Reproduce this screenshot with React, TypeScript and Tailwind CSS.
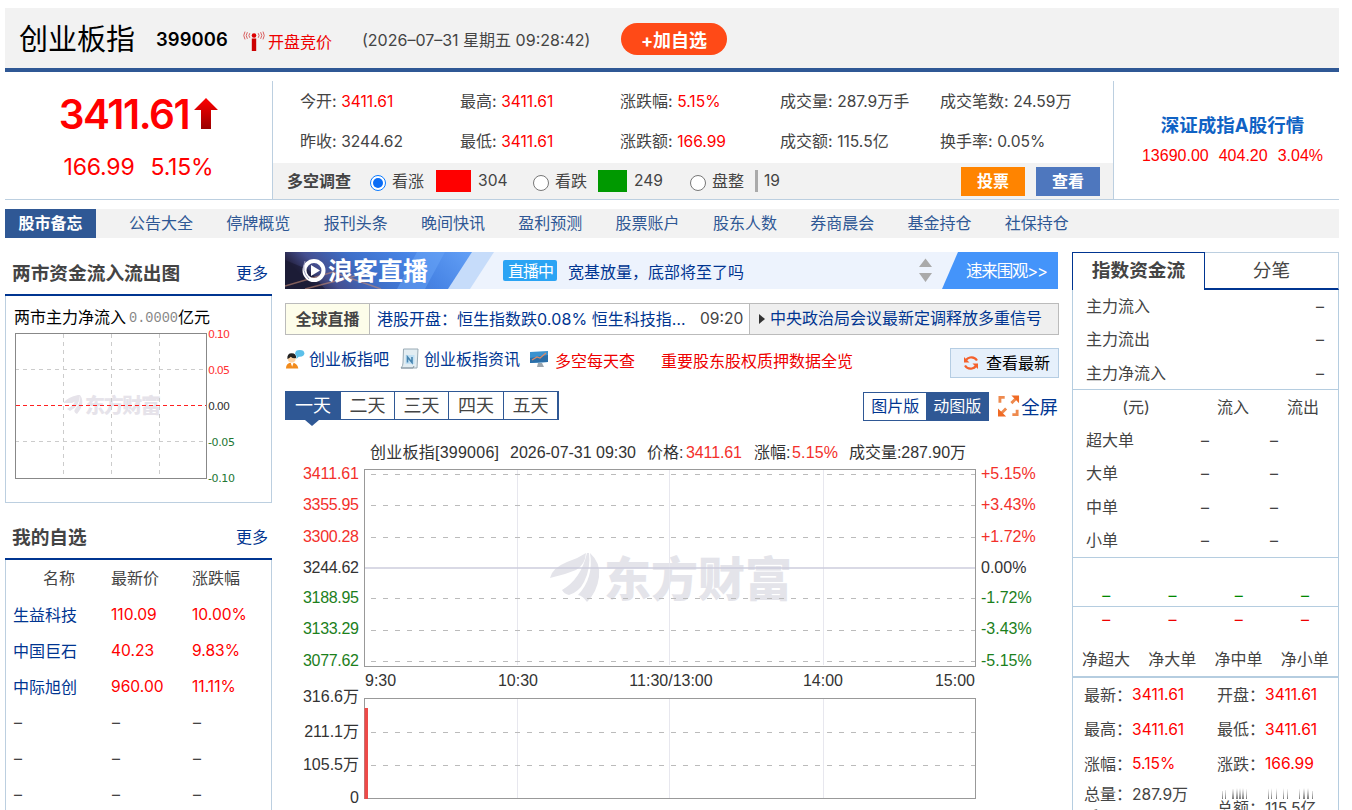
import React from "react";

const UP = "text-[#f00]";

const navItems = [
  "公告大全",
  "停牌概览",
  "报刊头条",
  "晚间快讯",
  "盈利预测",
  "股票账户",
  "股东人数",
  "券商晨会",
  "基金持仓",
  "社保持仓",
];

const quotes = [
  { label: "今开:", value: "3411.61", red: true },
  { label: "最高:", value: "3411.61", red: true },
  { label: "涨跌幅:", value: "5.15%", red: true },
  { label: "成交量:", value: "287.9", unit: "万手" },
  { label: "成交笔数:", value: "24.59", unit: "万" },
  { label: "昨收:", value: "3244.62" },
  { label: "最低:", value: "3411.61", red: true },
  { label: "涨跌额:", value: "166.99", red: true },
  { label: "成交额:", value: "115.5", unit: "亿" },
  { label: "换手率:", value: "0.05%" },
];

const favorites = [
  { name: "生益科技", price: "110.09", change: "10.00%" },
  { name: "中国巨石", price: "40.23", change: "9.83%" },
  { name: "中际旭创", price: "960.00", change: "11.11%" },
];

const details = [
  ["最新：", "3411.61", "开盘：", "3411.61"],
  ["最高：", "3411.61", "最低：", "3411.61"],
  ["涨幅：", "5.15%", "涨跌：", "166.99"],
];

const Num = ({ children, className = "" }: { children: React.ReactNode; className?: string }) => (
  <span className={`text-[15.6px] ${className}`}>{children}</span>
);

const Signal = () => (
  <svg width="22" height="22" viewBox="0 0 22 22" fill="none" className="mt-1 shrink-0">
    <circle cx="11" cy="4.5" r="2.3" fill="#d00" />
    <path d="M8.8 7.5h4.4v12.5H8.8z" fill="#c00" />
    <path d="M6.8 2.2q-1.8 2.3 0 4.6M15.2 2.2q1.8 2.3 0 4.6M4.4 1.2q-2.4 3.3 0 6.6M17.6 1.2q2.4 3.3 0 6.6M2 .6Q-.5 4.5 2 8.4M20 .6q2.5 3.9 0 7.8" stroke="#d86060" strokeWidth="1" />
  </svg>
);

const Header = () => (
  <header className="flex h-16 items-center border-b-4 border-[#2f5895] bg-[#f2f2f2] pt-1 pl-3.5">
    <h1 className="text-[29px] leading-[56px] text-black">创业板指</h1>
    <span className="ml-[21px] w-[87px] text-[18.4px] font-semibold tracking-[0.1px] text-black">399006</span>
    <Signal />
    <span className="ml-[3px] mt-1 w-[94px] text-base text-[#e00]">开盘竞价</span>
    <span className="w-[259px] text-base whitespace-nowrap">(2026–07–31 星期五 09:28:42)</span>
    <button className="-mt-0.5 h-8 w-[106px] rounded-full bg-[#ff4a17] pt-[3px] text-[18px] font-bold text-white">+加自选</button>
  </header>
);

const Radio = ({ checked = false }: { checked?: boolean }) => (
  <span
    className={`mt-[3px] flex size-4 shrink-0 items-center justify-center rounded-full border bg-white ${
      checked ? "border-[#0a7aff]" : "border-[#777]"
    }`}
  >
    {checked && <span className="size-2.5 rounded-full bg-[#0a6cf5]" />}
  </span>
);

const Survey = () => (
  <div className="flex h-9 items-center bg-[#f2f2f2] pl-3.5">
    <b className="w-[83px]">多空调查</b>
    <Radio checked />
    <span className="ml-1.5 w-[44px]">看涨</span>
    <span className="mr-[7px] h-[22px] w-[35px] bg-[#f00]" />
    <Num className="w-[55px]">304</Num>
    <Radio />
    <span className="ml-1.5 w-[43px]">看跌</span>
    <span className="mr-[7px] h-[22px] w-[29px] bg-[#090]" />
    <Num className="w-[56px]">249</Num>
    <Radio />
    <span className="ml-1.5 w-[43px]">盘整</span>
    <span className="mr-1.5 h-[22px] w-[3px] bg-[#aaa]" />
    <Num>19</Num>
    <button className="ml-auto h-[29px] w-16 bg-[#ff8400] font-bold text-white">投票</button>
    <button className="mr-[13px] ml-[11px] h-[29px] w-16 bg-[#4e77be] font-bold text-white">查看</button>
  </div>
);

const Summary = () => (
  <section className="flex h-[128px] border-b border-[#bccfe0] pt-[9px]">
    <div className="w-[267px] text-center text-[#f00]">
      <div className="flex h-[52px] items-center justify-center pt-4 text-[40.5px] font-semibold tracking-[-1.4px]">
        3411.61
        <svg width="24" height="31" viewBox="0 0 24 31" className="mb-1 ml-[5px]">
          <defs>
            <linearGradient id="arrow" x2="0" y2="1">
              <stop stopColor="#f00" />
              <stop offset="1" stopColor="#900" />
            </linearGradient>
          </defs>
          <path d="M12 0 24 12H17V31H7V12H0Z" fill="url(#arrow)" />
        </svg>
      </div>
      <div className="mt-[18px] flex justify-center gap-4 text-[23px] leading-8 tracking-[-0.2px]">
        <span>166.99</span>
        <span>5.15%</span>
      </div>
    </div>
    <div className="w-[842px] border-x border-[#bccfe0]">
      <div className="grid h-[82px] grid-cols-[160px_160px_160px_160px_1fr] grid-rows-2 items-center pb-0.5 pl-[27px]">
        {quotes.map((q) => (
          <div key={q.label} className="whitespace-nowrap">
            {q.label} <Num className={q.red ? UP : ""}>{q.value}</Num>
            {q.unit}
          </div>
        ))}
      </div>
      <Survey />
    </div>
    <div className="flex-1 pt-7 pl-3 text-center">
      <a className="text-[18.5px] leading-8 font-bold text-[#0f62c4]">深证成指A股行情</a>
      <div className="flex justify-center gap-2.5 font-[Liberation_Sans] leading-[30px] text-[#f00]">
        <span>13690.00</span>
        <span>404.20</span>
        <span>3.04%</span>
      </div>
    </div>
  </section>
);

const Nav = () => (
  <nav className="mt-[9px] flex h-[29px] items-center bg-[#f2f2f2] text-[#2f5895]">
    <a className="w-[91px] bg-[#2f5895] text-center leading-[29px] font-bold text-white">股市备忘</a>
    <div className="ml-[33px] flex gap-[33.3px] pb-0.5">
      {navItems.map((item) => (
        <a key={item}>{item}</a>
      ))}
    </div>
  </nav>
);

const ColumnTitle = ({ title }: { title: string }) => (
  <div className="flex h-11 items-center justify-between border-b-2 border-[#003591] pr-1 pl-[7px]">
    <h2 className="pt-0.5 text-[18.7px] font-bold">{title}</h2>
    <a className="text-[#003591]">更多</a>
  </div>
);

const FlowChart = () => (
  <svg width="265" height="206" className="block">
    <g fontSize="16" fill="#000">
      <text x="8" y="27">两市主力净流入</text>
      <text x="123" y="26" className="font-[Liberation_Mono]" fontSize="15" fill="#888" textLength="49" lengthAdjust="spacingAndGlyphs">0.0000</text>
      <text x="172" y="27">亿元</text>
    </g>
    <g fill="#e6e3ea">
      <path d="M57 107Q62 101 72 99V104L66 107ZM61 113Q69 109 72 99L74 99Q74 110 64 115ZM74 99Q80 107 71 118 67 116 69 113 75 107 74 99Z" />
      <text x="79" y="117" fontSize="20" fontWeight="900" textLength="76">东方财富</text>
    </g>
    <g stroke="#ccc" strokeDasharray="4 4">
      <path d="M57.5 38V182M105.5 38V182M153.5 38V182M9 73.5H200M9 145.5H200" />
    </g>
    <g stroke="#ff2020" strokeDasharray="4 3">
      <path d="M10 109.5H200" />
    </g>
    <rect x="9.5" y="37.5" width="191" height="145" fill="none" stroke="#888" />
    <g fontSize="11" className="font-[DejaVu_Sans]">
      <text x="202" y="42" fill="#f33" textLength="22">0.10</text>
      <text x="202" y="78" fill="#f33" textLength="22">0.05</text>
      <text x="202" y="114" fill="#333" textLength="22">0.00</text>
      <text x="202" y="150" fill="#273" textLength="27">-0.05</text>
      <text x="202" y="186" fill="#273" textLength="27">-0.10</text>
    </g>
  </svg>
);

const LeftColumn = () => (
  <aside className="w-[267px]">
    <ColumnTitle title="两市资金流入流出图" />
    <div className="h-[207px] border border-t-0 border-[#bccfe0]">
      <FlowChart />
    </div>
    <div className="mt-[13px]">
      <ColumnTitle title="我的自选" />
    </div>
    <div className="border-x border-[#bccfe0]">
      <div className="grid h-9 grid-cols-[98px_81px_1fr] items-center pl-[7px]">
        <span className="pl-[30px]">名称</span>
        <span>最新价</span>
        <span>涨跌幅</span>
      </div>
      {favorites.map((f) => (
        <div key={f.name} className="grid h-9 grid-cols-[98px_81px_1fr] items-center pt-px pl-[7px]">
          <a className="text-[#003591]">{f.name}</a>
          <Num className={UP}>{f.price}</Num>
          <Num className={UP}>{f.change}</Num>
        </div>
      ))}
      {[0, 1, 2].map((i) => (
        <div key={i} className="grid h-9 grid-cols-[98px_81px_1fr] items-center pl-2">
          <span>–</span>
          <span>–</span>
          <span>–</span>
        </div>
      ))}
    </div>
  </aside>
);

const Banner = () => (
  <div className="relative h-[37px] bg-[#edf3fd]">
    <svg width="773" height="37" className="block">
      <defs>
        <linearGradient id="sky" x1="0" y1=".2" x2="1" y2="0">
          <stop stopColor="#252342" />
          <stop offset=".13" stopColor="#454f90" />
          <stop offset=".35" stopColor="#3e6fc8" />
          <stop offset=".65" stopColor="#4784e5" />
          <stop offset="1" stopColor="#63a0f6" />
        </linearGradient>
      </defs>
      <path d="M0 0H209L185 37H0Z" fill="#c6dcfa" />
      <path d="M0 0H187L163 37H0Z" fill="url(#sky)" />
      <path d="M132 0H160L140 37H112Z" fill="#6aa5f7" opacity=".5" />
      <path d="M0 8 24 18 40 37H0Z" fill="#17182f" opacity=".6" />
      <path d="M0 34 48 20 96 37M20 37 70 24" stroke="#c58a75" strokeWidth="1.5" fill="none" opacity=".6" />
      <circle cx="29" cy="18.500" r="9.5" fill="none" stroke="#fff" strokeWidth="4" />
      <path d="M26 13 35 18.500 26 24Z" fill="#fff" />
      <path d="M20 9q-4 10 4 18" stroke="#99b" strokeWidth="1" fill="none" />
      <text x="43" y="28" fontSize="25" fontWeight="700" fill="#fff" textLength="100">浪客直播</text>
      <rect x="218" y="8" width="54" height="21" rx="2" fill="#2ba4f4" />
      <text x="223" y="25" fontSize="16" fill="#fff" textLength="46">直播中</text>
      <text x="283" y="25.500" fontSize="16" fill="#003591">宽基放量，底部将至了吗</text>
      <path d="M634 15H647L640.500 6.500ZM634 21H647L640.500 30Z" fill="#aaa" />
      <path d="M673 0H773V37H657Z" fill="#4494fa" />
      <text x="681" y="24.500" fontSize="16.500" fill="#fff" textLength="82">速来围观&gt;&gt;</text>
    </svg>
  </div>
);

const Ticker = () => (
  <div className="mt-3.5 flex h-8 w-[774px] items-center border border-[#bbb] leading-[30px] whitespace-nowrap">
    <b className="w-[84px] border-r border-[#bbb] bg-[#fdfdea] text-center">全球直播</b>
    <a className="w-[330px] pl-[7px] text-[#003591]">
      港股开盘：恒生指数跌<span className="tracking-[0.15px]">0.08%</span> 恒生科技指…
    </a>
    <Num className="w-[49px]">09:20</Num>
    <div className="flex flex-1 items-center border-l border-[#bbb] bg-[#efefef] pl-[9px] leading-[29px]">
      <svg width="6" height="10">
        <path d="M0 0 6 5 0 10Z" fill="#333" />
      </svg>
      <a className="ml-[5px] pb-px text-[#003591]">中央政治局会议最新定调释放多重信号</a>
    </div>
  </div>
);

const UserIcon = () => (
  <svg width="20" height="21" viewBox="0 0 21 21">
    <path d="M1 20q0-6 6-6t7 6Z" fill="#f28b1c" />
    <circle cx="7" cy="9.500" r="4.200" fill="#fbd2a4" />
    <path d="M2.500 10Q2 4 7 4t4.700 5Q8 9.500 6 7.500 5 9 2.500 10Z" fill="#222" />
    <path d="M6 14h3l-1.500 4Z" fill="#fff" />
    <ellipse cx="15.500" cy="4" rx="4.800" ry="3.600" fill="#5cc0ea" />
    <path d="M12 6v4l3-3Z" fill="#5cc0ea" />
  </svg>
);

const NewsIcon = () => (
  <svg width="20" height="22" viewBox="0 0 20 22">
    <path d="M3.500 1H18L17 20H1q2-2 2-5Z" fill="#e3edf2" stroke="#9aabb5" />
    <path d="M1 20h12l1-2" stroke="#8796a0" fill="none" />
    <rect x="5.500" y="7" width="9" height="9" fill="#c3e1f4" />
    <path d="M7.500 14.500V9l4.500 5.500V9" stroke="#4784af" strokeWidth="1.600" fill="none" />
  </svg>
);

const MonitorIcon = () => (
  <svg width="19" height="17" viewBox="0 0 19 17">
    <path d="M0 1 18 0V11L0 12Z" fill="#3a92cf" />
    <path d="M0 7 18 4V11L0 12Z" fill="#2a6ea8" />
    <path d="M2 9 7 6 10 7 16 2" stroke="#d98b68" strokeWidth="1.300" fill="none" />
    <path d="M8 12h4l2 4H7Z" fill="#9aa5ae" />
  </svg>
);

const Links = () => (
  <div className="mt-[13px] flex h-[30px] w-[774px] text-[#003591]">
    <div className="flex items-center pb-2">
      <UserIcon />
      <a className="ml-1 w-[91px]">创业板指吧</a>
      <NewsIcon />
      <a className="ml-1 w-[106px]">创业板指资讯</a>
      <MonitorIcon />
    </div>
    <a className="mt-px ml-1.5 w-[106px] text-[#e00]">多空每天查</a>
    <a className="mt-px text-[#e00]">重要股东股权质押数据全览</a>
    <button className="ml-auto flex w-[109px] items-center border border-[#b5cde3] bg-[#e6f0fb] pl-3 text-black">
      <svg width="16" height="16" viewBox="0 0 16 16" fill="none" stroke="#f4612c" strokeWidth="2.200">
        <path d="M14 5.500Q11.500 1.500 7 2.500 4.500 3 3 5M2 10.500Q4.500 14.500 9 13.500 11.500 13 13 11" />
        <path d="M1 2V7.500H6.500Z M15 14V8.500H9.500Z" fill="#f4612c" stroke="none" />
      </svg>
      <span className="ml-[7px]">查看最新</span>
    </button>
  </div>
);

const Toolbar = () => (
  <div className="mt-[13px] flex h-[30px] w-[774px] justify-between">
    <div className="relative flex h-[29px] divide-x divide-[#2f5895] border border-[#2f5895] text-[18px] leading-[27px]">
      <a className="w-[55px] bg-[#2f5895] text-center text-white">一天</a>
      <a className="w-[54px] text-center">二天</a>
      <a className="w-[54px] text-center">三天</a>
      <a className="w-[55px] text-center">四天</a>
      <a className="w-[54px] text-center">五天</a>
      <span className="absolute top-7 left-[19px] border-x-[7px] border-t-[6px] border-x-transparent border-t-[#2f5895]" />
    </div>
    <div className="flex items-center">
      <div className="mt-px flex h-[29px] border border-[#2f5895] leading-[27px]">
        <a className="w-[62px] text-center text-[#003591]">图片版</a>
        <a className="w-[62px] bg-[#2f5895] text-center text-white">动图版</a>
      </div>
      <svg width="22" height="22" viewBox="0 0 23 22" className="mr-px ml-[9px]" fill="none" stroke="#ee8a4e" strokeWidth="3">
        <path d="M2 7.500V2H7M15 20h5v-5" />
        <path d="M14 8 20 2M3 19 8.500 13.500" />
        <path d="M14 0h8v8ZM0 13.500V22h8.500Z" fill="#f06a24" stroke="none" />
      </svg>
      <a className="mt-1 mr-px text-[18.4px] text-[#003591]">全屏</a>
    </div>
  </div>
);

const priceAxis = [
  { y: 34.5, grid: 34.5, price: "3411.61", pct: "+5.15%", color: "#f3302b" },
  { y: 65, grid: 65.5, price: "3355.95", pct: "+3.43%", color: "#f3302b" },
  { y: 97, grid: 97.5, price: "3300.28", pct: "+1.72%", color: "#f3302b" },
  { y: 128, grid: 128, price: "3244.62", pct: "0.00%", color: "#333" },
  { y: 158, grid: 158.5, price: "3188.95", pct: "-1.72%", color: "#1c801c" },
  { y: 189, grid: 190.5, price: "3133.29", pct: "-3.43%", color: "#1c801c" },
  { y: 221, grid: 221.5, price: "3077.62", pct: "-5.15%", color: "#1c801c" },
];

const volumeAxis = [
  { y: 262, label: "316.6万" },
  { y: 297, label: "211.1万" },
  { y: 330, label: "105.5万" },
  { y: 363, label: "0" },
];

const IntradayChart = () => (
  <svg
    width="773"
    height="370"
    className="mt-[19px] block font-[Liberation_Sans,Noto_Sans_CJK_SC]"
    fontSize="16"
    fill="#333"
  >
    <text x="85" y="18" textLength="129">创业板指[399006]</text>
    <text x="225" y="18" textLength="126">2026-07-31 09:30</text>
    <text x="362" y="18">价格:</text>
    <text x="401" y="18" fill="#f3302b" textLength="56">3411.61</text>
    <text x="469" y="18">涨幅:</text>
    <text x="507" y="18" fill="#f3302b" textLength="46">5.15%</text>
    <text x="564" y="18" textLength="117">成交量:287.90万</text>

    {/* watermark */}
    <g fill="#e4e4ea">
      <path d="M265 138Q267 128 282 122 292 119 301 113 300 125 291 130L280 134Z" />
      <path d="M277 150Q296 139 302 113L304 113Q306 128 299 142 294 152 284 155Q279 154 277 150Z" />
      <path d="M305 113Q316 123 314 137 312 152 302 162 298 156 293 155 309 138 305 113Z" />
      <text x="319" y="156" fontSize="47" fontWeight="900" textLength="188">东方财富</text>
    </g>

    <path d="M232.500 30V225M384.500 30V225M538.500 30V225M232.500 259V358M384.500 259V358M538.500 259V358" stroke="#e7e7ee" />
    {priceAxis.map((row) => (
      <g key={row.price}>
        {row.y === 128 ? (
          <path d="M80 128H690" stroke="#ccd" strokeWidth="1.500" />
        ) : (
          <path d={`M86 ${row.grid}H690`} stroke="#bbb" strokeDasharray="5 7" />
        )}
        <text x="74" y={row.y + 4.5} fill={row.color} textAnchor="end" textLength="56">
          {row.price}
        </text>
        <text x="696" y={row.y + 4.5} fill={row.color}>
          {row.pct}
        </text>
      </g>
    ))}
    <rect x="79.500" y="29.500" width="611" height="197" fill="none" stroke="#999" />

    <text x="80" y="246">9:30</text>
    <text x="233" y="246" textAnchor="middle">10:30</text>
    <text x="386" y="246" textAnchor="middle">11:30/13:00</text>
    <text x="538" y="246" textAnchor="middle">14:00</text>
    <text x="690" y="246" textAnchor="end">15:00</text>

    {volumeAxis.map((row) => (
      <text key={row.label} x="74" y={row.y} textAnchor="end">
        {row.label}
      </text>
    ))}
    <path d="M86 292.500H690M86 325.500H690" stroke="#bbb" strokeDasharray="5 7" />
    <rect x="79.500" y="258.500" width="611" height="100" fill="none" stroke="#999" />
    <path d="M79.500 268H83V359H79.500Z" fill="#ee4a48" />
  </svg>
);

const RightColumn = () => (
  <aside className="w-[267px]">
    <div className="flex h-[38px] text-[18.7px] leading-[35px]">
      <a className="w-[133px] border-t border-r border-l border-[#003591] text-center font-bold">指数资金流</a>
      <a className="flex-1 border-t border-r border-b-2 border-t-[#bccfe0] border-r-[#bccfe0] border-b-[#003591] text-center">分笔</a>
    </div>
    <div className="border-x border-[#b5cde0]">
      <div className="h-[100px] border-b border-[#b5cde0] pr-3.5 pl-[13px]">
        {["主力流入", "主力流出", "主力净流入"].map((label) => (
          <div key={label} className="flex justify-between leading-[33.4px]">
            <span>{label}</span>
            <span>–</span>
          </div>
        ))}
      </div>
      <div className="h-[168px] border-b border-[#b5cde0]">
        <div className="flex pr-[19px] leading-[34px]">
          <span className="w-[126px] text-center">(元)</span>
          <span className="ml-[18px]">流入</span>
          <span className="ml-auto">流出</span>
        </div>
        {["超大单", "大单", "中单", "小单"].map((label) => (
          <div key={label} className="flex pl-[13px] leading-[33.3px]">
            <span className="w-[115px]">{label}</span>
            <span className="w-[69px]">–</span>
            <span>–</span>
          </div>
        ))}
      </div>
      <div className="grid h-[49px] grid-cols-4 items-end border-b border-[#b5cde0] pb-px text-center leading-5 text-[#080]">
        {[0, 1, 2, 3].map((i) => (
          <span key={i}>–</span>
        ))}
      </div>
      <div className="grid grid-cols-4 pt-0.5 text-center leading-5 text-[#e00]">
        {[0, 1, 2, 3].map((i) => (
          <span key={i}>–</span>
        ))}
      </div>
      <div className="grid h-[49px] grid-cols-4 items-end border-b-2 border-[#b5cde0] pb-[5px] text-center">
        {["净超大", "净大单", "净中单", "净小单"].map((label) => (
          <span key={label}>{label}</span>
        ))}
      </div>
      {details.map((row) => (
        <div key={row[0]} className="grid h-[34.3px] grid-cols-[48px_85px_48px_1fr] items-center pl-[11px] whitespace-nowrap">
          <span>{row[0]}</span>
          <Num className={UP}>{row[1]}</Num>
          <span>{row[2]}</span>
          <Num className={UP}>{row[3]}</Num>
        </div>
      ))}
      <div className="flex pl-[11px] whitespace-nowrap">
        <div className="w-[133px] pt-0.5 leading-[23px]">
          总量：<Num>287.9</Num>万<br />手
        </div>
        <div className="relative pt-[15px] leading-6">
          总额：<Num>115.5</Num>亿
          <svg width="100" height="12" className="absolute top-1.5 left-0">
            <defs>
              <linearGradient id="fade" x2="0" y2="1">
                <stop stopColor="#999" stopOpacity="0" />
                <stop offset="1" stopColor="#777" />
              </linearGradient>
            </defs>
            <path d="M5 4h1v8H5ZM8 3h1v9H8ZM15 2h2v10h-2ZM19 1h2v11h-2ZM22 1h2v11h-2ZM25 1h2v11h-2ZM29 2h1v10h-1ZM51 2h1v10h-1ZM54 1h1v11h-1ZM59 1h1v11h-1ZM66 1h1v11h-1ZM70 2h1v10h-1ZM82 2h1v10h-1ZM86 1h2v11h-2ZM90 1h2v11h-2ZM95 4h1v8h-1Z" fill="url(#fade)" />
          </svg>
        </div>
      </div>
    </div>
  </aside>
);

const App: React.FC = () => {
  return (
    <div className="h-[810px] w-[1352px] overflow-hidden bg-white pt-2 pr-[13px] pl-[5px] font-[Inter,Noto_Sans_CJK_SC,sans-serif] text-base text-[#444]">
      <Header />
      <Summary />
      <Nav />
      <main className="mt-3.5 flex items-start">
        <LeftColumn />
        <div className="mr-3.5 ml-[13px] w-[773px]">
          <Banner />
          <Ticker />
          <Links />
          <Toolbar />
          <IntradayChart />
        </div>
        <RightColumn />
      </main>
    </div>
  );
};

export default App;
